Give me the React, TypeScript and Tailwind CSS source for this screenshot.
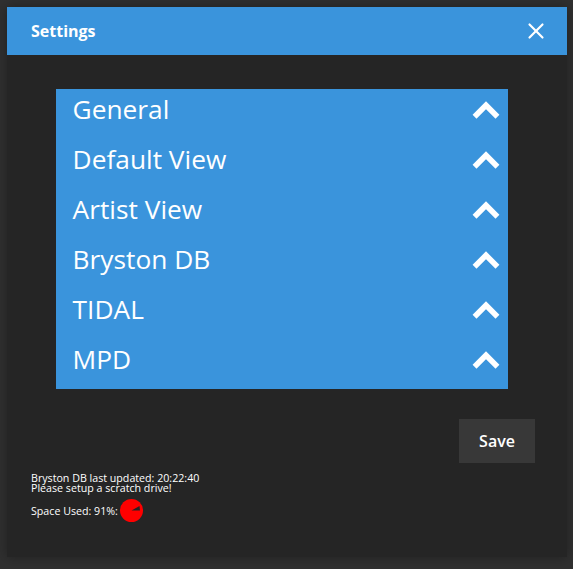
import { ChevronUp, X } from 'lucide-react'

const sections = ['General', 'Default View', 'Artist View', 'Bryston DB', 'TIDAL', 'MPD']

export default function App() {
  return (
    <div className="h-[569px] w-[573px] overflow-hidden bg-[#303030] pl-[7px] pt-[7px] font-['Open_Sans',sans-serif]">
      <div className="flex h-[550px] w-[560px] flex-col bg-[#252525] shadow-[0_0_12px_rgba(0,0,0,0.35)]">
        <div className="flex h-[48px] items-center justify-between bg-[#3a94dc] pl-6 pr-[18px] text-white">
          <span className="text-base font-bold">Settings</span>
          <X className="h-[26px] w-[26px]" strokeWidth={2} />
        </div>

        <div className="ml-[49px] mr-[59px] mt-[34px] bg-[#3a94dc]">
          {sections.map((name) => (
            <div key={name} className="flex h-[50px] items-center justify-between pb-[10px] pl-[16.6px] pr-[3px] text-white">
              <span className="text-[26.3px] leading-none">{name}</span>
              <ChevronUp className="mt-[2px] h-[38px] w-[38px]" strokeWidth={3.5} strokeLinecap="square" strokeLinejoin="miter" />
            </div>
          ))}
        </div>

        <div className="mt-[30px] flex justify-end pr-[32px]">
          <button className="h-[44px] w-[76px] bg-[#383838] text-base font-semibold text-white">Save</button>
        </div>

        <div className="mt-[10px] pl-6 text-[10.67px] leading-[10px] text-white">
          <p>Bryston DB last updated: 20:22:40</p>
          <p>Please setup a scratch drive!</p>
          <div className="mt-[6px] flex items-center gap-[3px]">
            <span>Space Used: 91%:</span>
            <svg width="23" height="23" viewBox="0 0 23 23" className="-ml-px">
              <circle cx="11.5" cy="11.5" r="11.5" fill="#ff0000" />
              <path d="M11.5 11.5 L19.5 7 L20 11.5 Z" fill="#252525" />
            </svg>
          </div>
        </div>
      </div>
    </div>
  )
}
